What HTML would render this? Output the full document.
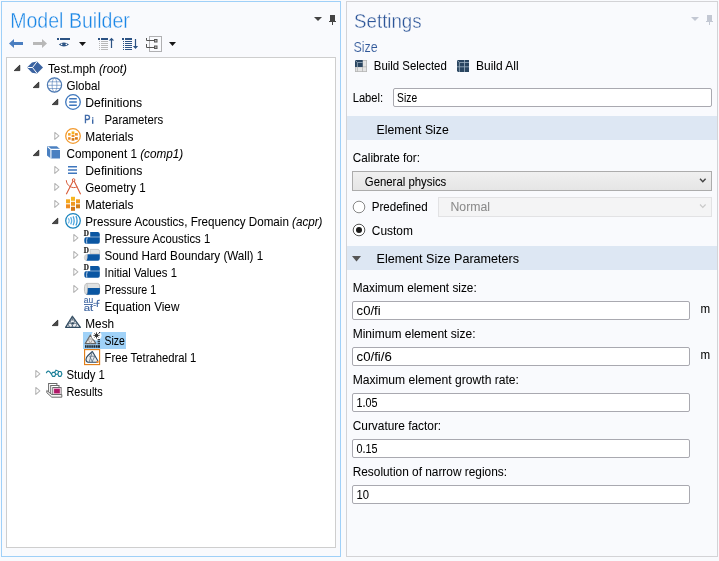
<!DOCTYPE html>
<html><head><meta charset="utf-8"><style>
html,body{margin:0;padding:0;}
body{width:719px;height:561px;overflow:hidden;background:#f9fafd;position:relative;}
svg{position:absolute;left:0;top:0;font-family:'Liberation Sans', sans-serif;will-change:transform;}
</style></head><body>
<svg width="719" height="561" viewBox="0 0 719 561">
<rect x="1.5" y="1.5" width="339" height="555" fill="#f9fafd" stroke="#9fd0f8" stroke-width="1"/>
<rect x="6.5" y="57.5" width="329" height="490" fill="#ffffff" stroke="#cecece" stroke-width="1"/>
<rect x="346.5" y="1.5" width="371" height="555" fill="#f9fafd" stroke="#d3d3d6" stroke-width="1"/>
<rect x="347" y="116" width="370" height="24" fill="#dde7f3"/>
<rect x="347" y="246" width="370" height="24" fill="#dde7f3"/>
<text x="10.2" y="28" font-size="21.4" fill="#1a86e6" textLength="119.6" lengthAdjust="spacingAndGlyphs" stroke="#f9fafd" stroke-width="0.38">Model Builder</text>
<text x="354.1" y="28" font-size="21" fill="#2c5598" textLength="67.5" lengthAdjust="spacingAndGlyphs" stroke="#f9fafd" stroke-width="0.4">Settings</text>
<text x="353.4" y="52" font-size="15.2" fill="#2f5799" textLength="24.3" lengthAdjust="spacingAndGlyphs" stroke="#f9fafd" stroke-width="0.2">Size</text>
<path d="M314 17 L322 17 L318 21 Z" fill="#444"/>
<path d="M330 15 H335 V21 H336 V22 H329 V21 H330 Z M332 22 H333 V25 H332 Z" fill="#444"/>
<path d="M691 17 L699 17 L695 21 Z" fill="#c3c8d3"/>
<path d="M707 15 H712 V21 H713 V22 H706 V21 H707 Z M709 22 H710 V25 H709 Z" fill="#c3c8d3"/>
<path d="M9 43.5 L14 39 V42 H23 V45 H14 V48 Z" fill="#4a7ec0"/>
<path d="M47 43.5 L42 39 V42 H33 V45 H42 V48 Z" fill="#b8b8b8"/>
<rect x="57" y="38" width="2" height="2" fill="#2c5384"/><rect x="60" y="38" width="10" height="2" fill="#2c5384"/>
<path d="M58.8 44.5 Q63.9 40.6 69 44.5 Q63.9 48.4 58.8 44.5 Z" fill="#2c5384"/><circle cx="61.6" cy="44.4" r="0.8" fill="#fff"/><circle cx="66.3" cy="44.4" r="0.8" fill="#fff"/>
<path d="M79 42 L86 42 L82.5 46 Z" fill="#161616"/>
<rect x="98" y="38" width="2" height="2" fill="#2c5384"/><rect x="101" y="38" width="7" height="2" fill="#2c5384"/><rect x="99" y="41" width="1" height="1" fill="#b9b9b9"/><rect x="101" y="41" width="7" height="1" fill="#b9b9b9"/><rect x="99" y="43" width="1" height="1" fill="#b9b9b9"/><rect x="101" y="43" width="7" height="1" fill="#b9b9b9"/><rect x="99" y="45" width="1" height="1" fill="#b9b9b9"/><rect x="101" y="45" width="7" height="1" fill="#b9b9b9"/><rect x="99" y="47" width="1" height="1" fill="#b9b9b9"/><rect x="101" y="47" width="7" height="1" fill="#b9b9b9"/><rect x="99" y="49" width="1" height="1" fill="#b9b9b9"/><rect x="101" y="49" width="7" height="1" fill="#b9b9b9"/><path d="M110.9 40.5 V48 H112.1 V40.5 H114.2 L111.5 37.8 L108.8 40.5 Z" fill="#2c5384"/>
<rect x="122" y="38" width="2" height="2" fill="#2c5384"/><rect x="125" y="38" width="7" height="2" fill="#2c5384"/><rect x="123" y="41" width="1" height="1" fill="#2c5384"/><rect x="125" y="41" width="7" height="1" fill="#2c5384"/><rect x="123" y="43" width="1" height="1" fill="#2c5384"/><rect x="125" y="43" width="7" height="1" fill="#2c5384"/><rect x="123" y="45" width="1" height="1" fill="#2c5384"/><rect x="125" y="45" width="7" height="1" fill="#2c5384"/><rect x="123" y="47" width="1" height="1" fill="#2c5384"/><rect x="125" y="47" width="7" height="1" fill="#2c5384"/><rect x="123" y="49" width="1" height="1" fill="#2c5384"/><rect x="125" y="49" width="7" height="1" fill="#2c5384"/><path d="M134.9 39 V46 H132.9 L135.5 49 L138.1 46 H136.1 V39 Z" fill="#2c5384"/>
<rect x="149.5" y="36.5" width="12" height="15" fill="none" stroke="#666" stroke-width="1" stroke-dasharray="1,1"/>
<path d="M146.5 38 V40.5 H154 M146.5 44 V47.5 H154" fill="none" stroke="#555" stroke-width="1"/>
<rect x="154.5" y="39.5" width="2.5" height="2.5" fill="#bbb" stroke="#555"/><rect x="154.5" y="46" width="2.5" height="2.5" fill="#bbb" stroke="#555"/>
<path d="M169 42 L176 42 L172.5 46 Z" fill="#161616"/>
<path d="M14.2 70.6 L19.8 65.1 V70.6 Z" fill="#4a4a4a" stroke="#1e1e1e" stroke-width="0.75" stroke-linejoin="round"/>
<path d="M27 67.5 L32 62.5 L37 61.6 L43 67.5 L37 73.6 L32 72.7 Z" fill="#3b63a1"/><path d="M27.5 67.5 H32.5 L36.8 62 M32.5 67.5 L37 73.3" stroke="#fff" stroke-width="1" fill="none"/>
<text x="48" y="73" font-size="12.3" fill="#000" textLength="79" lengthAdjust="spacingAndGlyphs" stroke="#000" stroke-width="0.04">Test.mph <tspan font-style="italic">(root)</tspan></text>
<path d="M33.2 87.6 L38.8 82.1 V87.6 Z" fill="#4a4a4a" stroke="#1e1e1e" stroke-width="0.75" stroke-linejoin="round"/>
<circle cx="54.5" cy="85" r="7.1" fill="#fff" stroke="#4b78b2" stroke-width="1.2"/><ellipse cx="54.5" cy="85" rx="2.4" ry="7" fill="none" stroke="#5a84ba" stroke-width="0.65"/><path d="M48.2 81.8 H60.8 M47.5 85.3 H61.5 M48.2 88.5 H60.8" stroke="#5a84ba" stroke-width="0.65"/>
<text x="66.5" y="90" font-size="12.3" fill="#000" textLength="33.6" lengthAdjust="spacingAndGlyphs" stroke="#000" stroke-width="0.04">Global</text>
<path d="M52.2 104.6 L57.8 99.1 V104.6 Z" fill="#4a4a4a" stroke="#1e1e1e" stroke-width="0.75" stroke-linejoin="round"/>
<circle cx="73" cy="102" r="7.3" fill="#fff" stroke="#3e77bd" stroke-width="1.3"/><path d="M69.2 98.8 H76.8 M69.2 102 H76.8 M69.2 105.2 H76.8" stroke="#3e77bd" stroke-width="1.6"/>
<text x="85.3" y="107" font-size="12.3" fill="#000" textLength="56.9" lengthAdjust="spacingAndGlyphs" stroke="#000" stroke-width="0.04">Definitions</text>
<text x="84.2" y="123" font-size="11.2" fill="#3a66a6" stroke="#3a66a6" stroke-width="0.5" textLength="6.2" lengthAdjust="spacingAndGlyphs">P</text><rect x="92" y="119.3" width="1.4" height="4.5" fill="#3a66a6"/><rect x="92" y="117.3" width="1.4" height="1.2" fill="#3a66a6"/>
<text x="104.5" y="124" font-size="12.3" fill="#000" textLength="58.8" lengthAdjust="spacingAndGlyphs" stroke="#000" stroke-width="0.04">Parameters</text>
<path d="M54.8 132.4 L58.9 135.8 L54.8 139.4 Z" fill="#fff" stroke="#b4b4b4" stroke-width="1.05" stroke-linejoin="round"/>
<circle cx="73" cy="136" r="7.3" fill="#fff" stroke="#f29a2e" stroke-width="1.3"/><rect x="71.6" y="131.4" width="2.8" height="2.6" fill="#f6b21f"/><rect x="71.6" y="134.7" width="2.8" height="2.3" fill="#ef9125"/><rect x="71.6" y="138.1" width="2.8" height="2.6" fill="#d77a17"/><rect x="68.1" y="133.1" width="2.5" height="2.5" fill="#f6a21f"/><rect x="75" y="133.1" width="2.8" height="2.5" fill="#ef9125"/><rect x="68.1" y="137.2" width="2.5" height="2.5" fill="#f08a20"/><rect x="75" y="137.2" width="2.8" height="2.5" fill="#d77a17"/>
<text x="85.3" y="141" font-size="12.3" fill="#000" textLength="48.1" lengthAdjust="spacingAndGlyphs" stroke="#000" stroke-width="0.04">Materials</text>
<path d="M33.2 155.6 L38.8 150.1 V155.6 Z" fill="#4a4a4a" stroke="#1e1e1e" stroke-width="0.75" stroke-linejoin="round"/>
<path d="M47.0 146.2 H56.8 L60.0 148.9 V158.6 H50.8 L47.0 155.4 Z" fill="#4a80c1"/><path d="M47.6 146.6 L50.9 149.4 H60.0 M50.9 149.4 V158.6" stroke="#fff" stroke-width="1.1" fill="none"/>
<text x="66.5" y="158" font-size="12.3" fill="#000" textLength="116.7" lengthAdjust="spacingAndGlyphs" stroke="#000" stroke-width="0.04">Component 1 <tspan font-style="italic">(comp1)</tspan></text>
<path d="M54.8 166.4 L58.9 169.8 L54.8 173.4 Z" fill="#fff" stroke="#b4b4b4" stroke-width="1.05" stroke-linejoin="round"/>
<path d="M68 166.8 H77 M68 170 H77 M68 173.2 H77" stroke="#3e76bd" stroke-width="1.6"/>
<text x="85.3" y="175" font-size="12.3" fill="#000" textLength="57" lengthAdjust="spacingAndGlyphs" stroke="#000" stroke-width="0.04">Definitions</text>
<path d="M54.8 183.4 L58.9 186.8 L54.8 190.4 Z" fill="#fff" stroke="#b4b4b4" stroke-width="1.05" stroke-linejoin="round"/>
<path d="M73.1 181 L66.3 194.2 M74.1 181 L80.6 194.2" stroke="#d85c3a" stroke-width="1.1" fill="none"/><circle cx="73.6" cy="180" r="1.3" fill="#fff" stroke="#d85c3a" stroke-width="1"/><path d="M66.3 180.2 A7.6 7.6 0 0 0 77.3 186.8" stroke="#d85c3a" stroke-width="1" fill="none"/>
<text x="85.3" y="192" font-size="12.3" fill="#000" textLength="60.3" lengthAdjust="spacingAndGlyphs" stroke="#000" stroke-width="0.04">Geometry 1</text>
<path d="M54.8 200.4 L58.9 203.8 L54.8 207.4 Z" fill="#fff" stroke="#b4b4b4" stroke-width="1.05" stroke-linejoin="round"/>
<rect x="71" y="196.8" width="4" height="4" fill="#f6b620"/><rect x="71" y="201.8" width="4" height="4" fill="#ef9822"/><rect x="71" y="206.8" width="4" height="4" fill="#d27718"/><rect x="66" y="199.3" width="4" height="4" fill="#f6aa20"/><rect x="76" y="199.3" width="4" height="4" fill="#f09a22"/><rect x="66" y="204.3" width="4" height="4" fill="#f08c20"/><rect x="76" y="204.3" width="4" height="4" fill="#d27d18"/>
<text x="85.3" y="209" font-size="12.3" fill="#000" textLength="48.1" lengthAdjust="spacingAndGlyphs" stroke="#000" stroke-width="0.04">Materials</text>
<path d="M52.2 223.6 L57.8 218.1 V223.6 Z" fill="#4a4a4a" stroke="#1e1e1e" stroke-width="0.75" stroke-linejoin="round"/>
<circle cx="73" cy="220.8" r="7.3" fill="#fff" stroke="#1a84be" stroke-width="1.25"/><path d="M68.2 218.20000000000002 Q70.3 220.8 68.2 223.4" stroke="#7fc0ea" stroke-width="1.3" fill="none"/><path d="M70.6 217.20000000000002 Q72.69999999999999 220.8 70.6 224.4" stroke="#5fb0e4" stroke-width="1.3" fill="none"/><path d="M73.1 216.4 Q75.19999999999999 220.8 73.1 225.20000000000002" stroke="#4aa4de" stroke-width="1.3" fill="none"/><path d="M76.0 216.0 Q78.1 220.8 76.0 225.60000000000002" stroke="#3a9ad6" stroke-width="1.3" fill="none"/>
<text x="85.3" y="226" font-size="12.3" fill="#000" textLength="237.2" lengthAdjust="spacingAndGlyphs" stroke="#000" stroke-width="0.04">Pressure Acoustics, Frequency Domain <tspan font-style="italic">(acpr)</tspan></text>
<path d="M73.8 234.4 L77.9 237.8 L73.8 241.4 Z" fill="#fff" stroke="#b4b4b4" stroke-width="1.05" stroke-linejoin="round"/>
<path d="M90.2 232 H98 Q99.8 232 99.8 234.5 V236.75 H90.2 Z" fill="#0a56a2"/><path d="M86 237.3 H99.8 V241.5 Q99.8 243.7 98 243.7 H86 Q84.3 243.7 84.3 240.5 Q84.3 237.3 86 237.3 Z" fill="#0a56a2"/><path d="M87.2 237.5 Q86.2 240.5 86.8 243.6" stroke="#e8eef6" stroke-width="0.8" fill="none"/><text x="83.8" y="236" font-size="7.6" font-weight="bold" font-family="Liberation Serif" fill="#111" stroke="#111" stroke-width="0.15" textLength="5.2" lengthAdjust="spacingAndGlyphs">D</text>
<text x="104.5" y="243" font-size="12.3" fill="#000" textLength="105.7" lengthAdjust="spacingAndGlyphs" stroke="#000" stroke-width="0.04">Pressure Acoustics 1</text>
<path d="M73.8 251.4 L77.9 254.8 L73.8 258.4 Z" fill="#fff" stroke="#b4b4b4" stroke-width="1.05" stroke-linejoin="round"/>
<path d="M90.2 249.4 H98 Q99.6 249.4 99.6 251.5 V254 H90.2 Z" fill="#e2e4e4" stroke="#b9b9b9" stroke-width="0.7"/><path d="M87.6 254.3 Q84.3 254.3 84.3 257.5 Q84.3 260.7 87 260.7 Z" fill="#d8d8d8" stroke="#c0c0c0" stroke-width="0.5"/><path d="M87.6 254.3 H99.8 V258.5 Q99.8 260.7 98 260.7 H86.6 Q87.8 258 87.6 254.3 Z" fill="#0a56a2"/><text x="83.8" y="253" font-size="7.6" font-weight="bold" font-family="Liberation Serif" fill="#111" stroke="#111" stroke-width="0.15" textLength="5.2" lengthAdjust="spacingAndGlyphs">D</text>
<text x="104.5" y="260" font-size="12.3" fill="#000" textLength="158.7" lengthAdjust="spacingAndGlyphs" stroke="#000" stroke-width="0.04">Sound Hard Boundary (Wall) 1</text>
<path d="M73.8 268.4 L77.9 271.8 L73.8 275.4 Z" fill="#fff" stroke="#b4b4b4" stroke-width="1.05" stroke-linejoin="round"/>
<path d="M90.2 266 H98 Q99.8 266 99.8 268.5 V270.75 H90.2 Z" fill="#0a56a2"/><path d="M86 271.3 H99.8 V275.5 Q99.8 277.7 98 277.7 H86 Q84.3 277.7 84.3 274.5 Q84.3 271.3 86 271.3 Z" fill="#0a56a2"/><path d="M87.2 271.5 Q86.2 274.5 86.8 277.6" stroke="#e8eef6" stroke-width="0.8" fill="none"/><text x="83.8" y="270" font-size="7.6" font-weight="bold" font-family="Liberation Serif" fill="#111" stroke="#111" stroke-width="0.15" textLength="5.2" lengthAdjust="spacingAndGlyphs">D</text>
<text x="104.5" y="277" font-size="12.3" fill="#000" textLength="72.4" lengthAdjust="spacingAndGlyphs" stroke="#000" stroke-width="0.04">Initial Values 1</text>
<path d="M73.8 285.4 L77.9 288.8 L73.8 292.4 Z" fill="#fff" stroke="#b4b4b4" stroke-width="1.05" stroke-linejoin="round"/>
<path d="M87 283.4 H97.8 Q99.6 283.4 99.6 286 V292 Q99.6 294.6 97.8 294.6 H87 Q84.4 294.6 84.4 289 Q84.4 283.4 87 283.4 Z" fill="#e0e2e2" stroke="#b5b5b5" stroke-width="0.8"/><path d="M87.6 288 H99.9 V292.2 Q99.9 294.8 97.8 294.8 H86.5 Q87.7 292 87.6 288 Z" fill="#0a56a2"/><path d="M87 283.6 Q88.2 289 87 294.4" stroke="#b5b5b5" stroke-width="0.6" fill="none"/>
<text x="104.5" y="294" font-size="12.3" fill="#000" textLength="51.6" lengthAdjust="spacingAndGlyphs" stroke="#000" stroke-width="0.04">Pressure 1</text>
<text x="83.7" y="302.5" font-size="8.3" fill="#3d64a0" stroke="#3d64a0" stroke-width="0.12" textLength="9.4" lengthAdjust="spacingAndGlyphs">au</text><rect x="84" y="304.1" width="8.9" height="0.9" fill="#3d64a0"/><text x="83.7" y="310.8" font-size="8.3" fill="#3d64a0" stroke="#3d64a0" stroke-width="0.12" textLength="9.4" lengthAdjust="spacingAndGlyphs">at</text><rect x="93.4" y="302.9" width="2.4" height="0.8" fill="#3d64a0"/><rect x="93.4" y="305.1" width="2.4" height="0.8" fill="#3d64a0"/><path d="M97.3 306.9 V301.8 Q97.3 300 99.8 300.2 M96.2 303.3 H99.4" stroke="#3d64a0" stroke-width="1.1" fill="none"/>
<text x="104.5" y="311" font-size="12.3" fill="#000" textLength="74.9" lengthAdjust="spacingAndGlyphs" stroke="#000" stroke-width="0.04">Equation View</text>
<path d="M52.2 325.6 L57.8 320.1 V325.6 Z" fill="#4a4a4a" stroke="#1e1e1e" stroke-width="0.75" stroke-linejoin="round"/>
<path d="M72.4 316.3 L80.4 327.3 H65.6 Z" fill="#eceef0" stroke="#2f4a60" stroke-width="1.3" stroke-linejoin="round"/><path d="M69.7 320 H75.1 M67.6 323.3 H77.4 M69.7 320 L73 327 M75.1 320 L71.8 327 M67.6 323.3 L69.5 327 M77.4 323.3 L75.5 327 M72.4 316.3 V320" stroke="#4f6275" stroke-width="0.85" fill="none"/><circle cx="72.7" cy="323.3" r="1" fill="#2f4a60"/>
<text x="85.3" y="328" font-size="12.3" fill="#000" textLength="28.8" lengthAdjust="spacingAndGlyphs" stroke="#000" stroke-width="0.04">Mesh</text>
<rect x="83" y="332" width="43" height="17" fill="#a0d2f8"/>
<path d="M90.4 335 L95.9 343.6 H85.2 Z" fill="#e8e8e8" stroke="#666" stroke-width="1.15" stroke-linejoin="round"/><path d="M88 339 H92.8 L90.4 343.5 Z" stroke="#888" stroke-width="0.7" fill="none"/><circle cx="96.5" cy="335.4" r="5" fill="#fff"/><path d="M96.5 332.3 V338.5 M93.4 335.4 H99.6 M94.4 333.3 L98.6 337.5 M98.6 333.3 L94.4 337.5" stroke="#333" stroke-width="0.9"/><circle cx="96.5" cy="335.4" r="1.6" fill="#333"/><rect x="99" y="332" width="1.2" height="1.2" fill="#223"/><rect x="85.0" y="345.2" width="1.6" height="2.6" fill="#1f2a33"/><rect x="87.1" y="345.2" width="1.6" height="2.6" fill="#1f2a33"/><rect x="89.2" y="345.2" width="1.6" height="2.6" fill="#1f2a33"/><rect x="91.3" y="345.2" width="1.6" height="2.6" fill="#1f2a33"/><rect x="93.4" y="345.2" width="1.6" height="2.6" fill="#1f2a33"/><rect x="95.5" y="345.2" width="1.6" height="2.6" fill="#1f2a33"/><rect x="97.4" y="345.2" width="2.6" height="2.6" fill="#1f2a33"/><rect x="97.6" y="339.1" width="2.4" height="1.2" fill="#1f2a33"/><rect x="97.6" y="341.1" width="2.4" height="1.2" fill="#1f2a33"/><rect x="97.6" y="343.1" width="2.4" height="1.2" fill="#1f2a33"/>
<text x="104.5" y="345" font-size="12.3" fill="#000" textLength="20.3" lengthAdjust="spacingAndGlyphs" stroke="#000" stroke-width="0.04">Size</text>
<rect x="84.6" y="349.6" width="15" height="15" fill="#fff" stroke="#e07a10" stroke-width="1.1"/><path d="M92.4 351.5 L97.8 360.8 Q98 362.2 96.5 362.2 H88.2 Q86 362 86 359.5 Q86 357.5 88 355.5 Z" fill="#e9ecef" stroke="#2e4a62" stroke-width="1.1" stroke-linejoin="round"/><path d="M89.7 356.2 H94.8 M92.4 351.5 L89.2 362 M89.7 356.2 L92.5 362 M94.8 356.2 L92 362" stroke="#5a6e82" stroke-width="0.8" fill="none"/><rect x="96.5" y="361" width="2" height="2" fill="#e98a30"/>
<text x="104.5" y="362" font-size="12.3" fill="#000" textLength="91.9" lengthAdjust="spacingAndGlyphs" stroke="#000" stroke-width="0.04">Free Tetrahedral 1</text>
<path d="M35.8 370.4 L39.9 373.8 L35.8 377.4 Z" fill="#fff" stroke="#b4b4b4" stroke-width="1.05" stroke-linejoin="round"/>
<path d="M46.3 373.1 Q47.7 370.4 48.9 371.2 Q50.1 372 51.5 374.3" stroke="#1a7f98" stroke-width="1.2" fill="none"/><path d="M51.5 374.3 L52.5 372.3 H54.7 L55.7 374.3 L54.7 376.3 H52.5 Z" stroke="#1a7f98" stroke-width="1.15" fill="none" stroke-linejoin="round"/><path d="M57.8 374 L58.8 371.5 H60.9 L61.9 374 L60.9 376.3 H58.8 Z" stroke="#1a7f98" stroke-width="1.15" fill="none" stroke-linejoin="round"/><path d="M55.7 374.3 H57.8 M54.7 372.3 L56.0 370.1 L58.8 371.5" stroke="#1a7f98" stroke-width="1.1" fill="none"/>
<text x="66.5" y="379" font-size="12.3" fill="#000" textLength="38.4" lengthAdjust="spacingAndGlyphs" stroke="#000" stroke-width="0.04">Study 1</text>
<path d="M35.8 387.4 L39.9 390.8 L35.8 394.4 Z" fill="#fff" stroke="#b4b4b4" stroke-width="1.05" stroke-linejoin="round"/>
<rect x="48.6" y="383.5" width="8.3" height="10" fill="#fff" stroke="#6a6a6a" stroke-width="1"/><rect x="50.7" y="385.5" width="8.3" height="9" fill="#fff" stroke="#6a6a6a" stroke-width="1"/><rect x="52.8" y="387.5" width="8.3" height="7" fill="#fff" stroke="#6a6a6a" stroke-width="1"/><rect x="53.4" y="388.1" width="7.1" height="5.9" fill="#f2c4dc"/><rect x="54.1" y="388.8" width="5.7" height="4.5" fill="#b01868"/><path d="M46.8 390.5 V392.7 L51.8 397.2 H61.8 V394.5 H51.8 L46.8 390.5 Z" fill="#f6f6f6" stroke="#6a6a6a" stroke-width="1" stroke-linejoin="round"/>
<text x="66.5" y="396" font-size="12.3" fill="#000" textLength="36.3" lengthAdjust="spacingAndGlyphs" stroke="#000" stroke-width="0.04">Results</text>
<rect x="355.4" y="60.4" width="11.2" height="11.2" fill="#e4e4e4" stroke="#b5b5b5" stroke-width="0.8"/><path d="M362.5 60 V72 M355 66.8 H367 M357.4 66.8 V72" stroke="#b5b5b5" stroke-width="0.8" fill="none"/><rect x="355" y="60" width="7.7" height="7" fill="#2a4560"/><path d="M355 60.2 L357.4 62.5 H362.7 M357.4 62.5 V67" stroke="#9db0c2" stroke-width="0.8" fill="none"/>
<rect x="457" y="60" width="12" height="12" fill="#2a4560"/><path d="M457 60.2 L459.4 62.5 H469 M459.4 62.5 V72 M464.5 60 V72 M457 66.8 H469" stroke="#9db0c2" stroke-width="0.8" fill="none"/><path d="M457 71 L458 72 H457Z" fill="#f9fafd"/>
<text x="373.8" y="70" font-size="12.3" fill="#000" textLength="73" lengthAdjust="spacingAndGlyphs" stroke="#000" stroke-width="0.04">Build Selected</text>
<text x="476" y="70" font-size="12.3" fill="#000" textLength="42.7" lengthAdjust="spacingAndGlyphs" stroke="#000" stroke-width="0.04">Build All</text>
<text x="352.7" y="102" font-size="12.3" fill="#000" textLength="30.4" lengthAdjust="spacingAndGlyphs" stroke="#000" stroke-width="0.04">Label:</text>
<rect x="393.5" y="88.5" width="318" height="18" rx="1.5" fill="#fff" stroke="#a9a9b0" stroke-width="1"/>
<text x="397.1" y="102" font-size="12.3" fill="#000" textLength="20" lengthAdjust="spacingAndGlyphs" stroke="#000" stroke-width="0.04">Size</text>
<text x="376.5" y="134" font-size="12.3" fill="#000" textLength="72.3" lengthAdjust="spacingAndGlyphs" stroke="#000" stroke-width="0.04">Element Size</text>
<text x="352.8" y="162" font-size="12.3" fill="#000" textLength="67.2" lengthAdjust="spacingAndGlyphs" stroke="#000" stroke-width="0.04">Calibrate for:</text>
<defs><linearGradient id="cg" x1="0" y1="0" x2="0" y2="1"><stop offset="0" stop-color="#f0f0f0"/><stop offset="1" stop-color="#e5e5e5"/></linearGradient></defs>
<rect x="352.5" y="171.5" width="359" height="19" fill="url(#cg)" stroke="#acacac" stroke-width="1"/>
<text x="364.8" y="186" font-size="12.3" fill="#000" textLength="81.5" lengthAdjust="spacingAndGlyphs" stroke="#000" stroke-width="0.04">General physics</text>
<path d="M700 178.8 L702.8 181.8 L705.6 178.8" stroke="#444" stroke-width="1.4" fill="none"/>
<circle cx="359" cy="207" r="5.8" fill="#fff" stroke="#888" stroke-width="1"/>
<text x="371.7" y="211" font-size="12.3" fill="#000" textLength="56" lengthAdjust="spacingAndGlyphs" stroke="#000" stroke-width="0.04">Predefined</text>
<rect x="438.5" y="197.5" width="273" height="19" fill="#f4f4f5" stroke="#e2e2e4" stroke-width="1"/>
<text x="450.5" y="211" font-size="12.3" fill="#8a8a8a" textLength="39.5" lengthAdjust="spacingAndGlyphs" stroke="#8a8a8a" stroke-width="0.04">Normal</text>
<path d="M700 204.5 L702.8 207.5 L705.6 204.5" stroke="#c8c8c8" stroke-width="1.1" fill="none"/>
<circle cx="359" cy="230" r="5.8" fill="#fff" stroke="#555" stroke-width="1"/><circle cx="359" cy="230" r="3" fill="#1a1a1a"/>
<text x="371.8" y="234.5" font-size="12.3" fill="#000" textLength="41" lengthAdjust="spacingAndGlyphs" stroke="#000" stroke-width="0.04">Custom</text>
<path d="M352 256 L361 256 L356.5 261.5 Z" fill="#555"/>
<text x="376.5" y="263" font-size="12.3" fill="#000" textLength="142.5" lengthAdjust="spacingAndGlyphs" stroke="#000" stroke-width="0.04">Element Size Parameters</text>
<text x="352.7" y="292" font-size="12.3" fill="#000" textLength="124" lengthAdjust="spacingAndGlyphs" stroke="#000" stroke-width="0.04">Maximum element size:</text>
<rect x="352.5" y="301.5" width="337" height="18" rx="1.5" fill="#fff" stroke="#a9a9b0" stroke-width="1"/>
<text x="356.6" y="315" font-size="12.3" fill="#000" textLength="24" lengthAdjust="spacingAndGlyphs" stroke="#000" stroke-width="0.04">c0/fi</text>
<text x="700.6" y="313" font-size="12.3" fill="#000" textLength="9.6" lengthAdjust="spacingAndGlyphs" stroke="#000" stroke-width="0.04">m</text>
<text x="352.7" y="338" font-size="12.3" fill="#000" textLength="122.8" lengthAdjust="spacingAndGlyphs" stroke="#000" stroke-width="0.04">Minimum element size:</text>
<rect x="352.5" y="347.5" width="337" height="18" rx="1.5" fill="#fff" stroke="#a9a9b0" stroke-width="1"/>
<text x="356.6" y="361" font-size="12.3" fill="#000" textLength="35.2" lengthAdjust="spacingAndGlyphs" stroke="#000" stroke-width="0.04">c0/fi/6</text>
<text x="700.6" y="359" font-size="12.3" fill="#000" textLength="9.6" lengthAdjust="spacingAndGlyphs" stroke="#000" stroke-width="0.04">m</text>
<text x="352.7" y="384" font-size="12.3" fill="#000" textLength="166.3" lengthAdjust="spacingAndGlyphs" stroke="#000" stroke-width="0.04">Maximum element growth rate:</text>
<rect x="352.5" y="393.5" width="337" height="18" rx="1.5" fill="#fff" stroke="#a9a9b0" stroke-width="1"/>
<text x="356.6" y="407" font-size="12.3" fill="#000" textLength="21" lengthAdjust="spacingAndGlyphs" stroke="#000" stroke-width="0.04">1.05</text>
<text x="352.7" y="430" font-size="12.3" fill="#000" textLength="88.5" lengthAdjust="spacingAndGlyphs" stroke="#000" stroke-width="0.04">Curvature factor:</text>
<rect x="352.5" y="439.5" width="337" height="18" rx="1.5" fill="#fff" stroke="#a9a9b0" stroke-width="1"/>
<text x="356.6" y="453" font-size="12.3" fill="#000" textLength="21" lengthAdjust="spacingAndGlyphs" stroke="#000" stroke-width="0.04">0.15</text>
<text x="352.7" y="476" font-size="12.3" fill="#000" textLength="154.3" lengthAdjust="spacingAndGlyphs" stroke="#000" stroke-width="0.04">Resolution of narrow regions:</text>
<rect x="352.5" y="485.5" width="337" height="18" rx="1.5" fill="#fff" stroke="#a9a9b0" stroke-width="1"/>
<text x="356.6" y="499" font-size="12.3" fill="#000" textLength="12.5" lengthAdjust="spacingAndGlyphs" stroke="#000" stroke-width="0.04">10</text>
</svg>
</body></html>
